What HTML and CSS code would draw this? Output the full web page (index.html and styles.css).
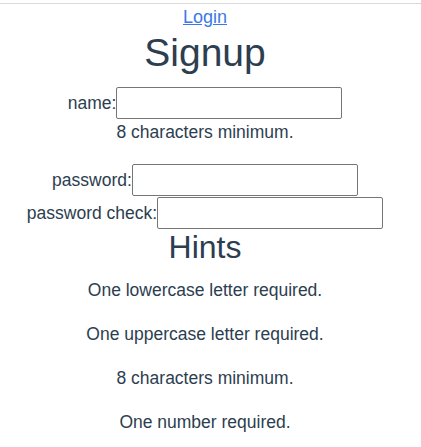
FILE: index.html
```html
<!DOCTYPE html>
<html>
<head>
<meta charset="utf-8">
<link rel="stylesheet" href="styles.css">
</head>
<body>
<div class="topline"></div>
<div class="app">
  <nav class="nav"><a href="#" class="nav-link">Login</a></nav>
  <h1 class="title">Signup</h1>
  <form class="form">
    <div class="row row-name">
      <label class="label">name:</label><input class="field" type="text">
    </div>
    <p class="note">8 characters minimum.</p>
    <div class="row row-pass">
      <label class="label">password:</label><input class="field" type="password">
    </div>
    <div class="row row-check">
      <label class="label">password check:</label><input class="field" type="password">
    </div>
  </form>
  <h2 class="subtitle">Hints</h2>
  <div class="hints">
    <p class="hint">One lowercase letter required.</p>
    <p class="hint">One uppercase letter required.</p>
    <p class="hint">8 characters minimum.</p>
    <p class="hint">One number required.</p>
  </div>
</div>
</body>
</html>
```

FILE: styles.css
```css
html, body {
  margin: 0;
  padding: 0;
  background: #ffffff;
}
body {
  font-family: "Liberation Sans", Arial, sans-serif;
  color: #2c3e50;
  font-size: 17.5px;
}
.topline {
  margin-top: 3px;
  border-top: 1px solid #d9d9d9;
}
.app {
  padding-right: 11px;
  text-align: center;
}
.nav {
  margin-top: 3px;
  line-height: 20px;
  font-size: 18px;
}
.nav-link {
  color: #3b79e8;
  text-decoration: underline;
}
.title {
  margin: 3px 0 0;
  font-size: 39px;
  line-height: 45px;
  font-weight: normal;
}
.form {
  margin: 0;
}
.row {
  display: flex;
  justify-content: center;
  align-items: center;
}
.row-name {
  margin-top: 12px;
}
.row-pass {
  margin-top: 22px;
  margin-bottom: 1px;
}
.label {
  line-height: 20px;
}
.field {
  box-sizing: border-box;
  width: 226px;
  height: 32px;
  margin: 0;
  padding: 1px 2px;
  border: 1px solid #767676;
  border-radius: 2px;
  background: #fff;
  font-family: inherit;
  font-size: 16px;
}
.note {
  margin: 3px 0 0;
  line-height: 20px;
}
.subtitle {
  margin: 0;
  font-size: 32px;
  line-height: 36px;
  font-weight: normal;
}
.hints {
  margin-top: 15px;
  display: flex;
  flex-direction: column;
  gap: 24px;
}
.hint {
  margin: 0;
  line-height: 20px;
}
```
